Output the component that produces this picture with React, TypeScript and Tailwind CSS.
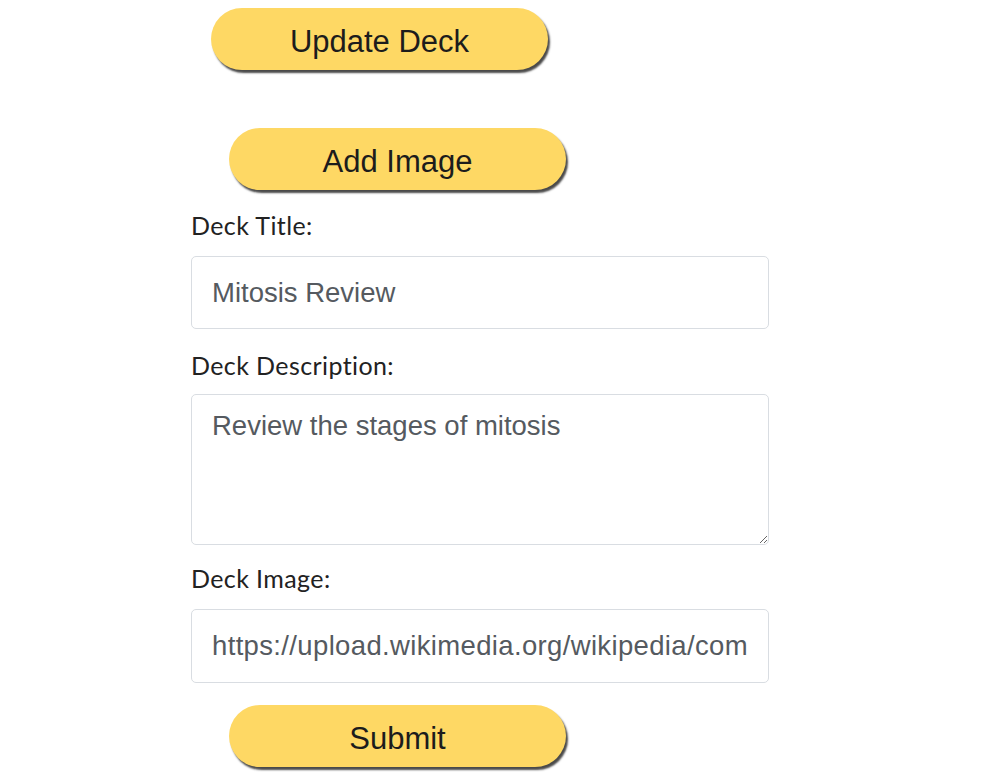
import React from 'react';

const btn =
  "h-[62px] w-[337px] rounded-full bg-[#fed864] pt-[6px] text-[31px] text-[#1c1c1c] shadow-[2px_3px_2px_#4a4a4a] flex items-center justify-center [font-family:'Liberation_Sans',Arial,sans-serif]";

const label =
  "text-[25px] leading-[30px] tracking-[0.4px] text-[#222] [font-family:Lato,'Noto_Sans',sans-serif]";

const field =
  "w-full rounded-[5px] border border-[#d9dde2] bg-white px-[20px] text-[27.5px] text-[#555a60] outline-none [font-family:'Liberation_Sans',Arial,sans-serif]";

export default function App() {
  return (
    <div className="min-h-screen bg-white">
      <div className="ml-[191px] flex w-[578px] flex-col items-start pt-[8px]">
        <button className={`${btn} ml-[20px]`}>Update Deck</button>
        <button className={`${btn} ml-[38px] mt-[58px]`}>Add Image</button>

        <label className={`${label} mt-[20px]`}>Deck Title:</label>
        <input
          readOnly
          className={`${field} mt-[16px] h-[73px]`}
          value="Mitosis Review"
        />

        <label className={`${label} mt-[21px]`}>Deck Description:</label>
        <textarea
          readOnly
          className={`${field} mt-[14px] h-[151px] pt-[10px] leading-[1.5]`}
          value="Review the stages of mitosis"
        />

        <label className={`${label} mt-[18px]`}>Deck Image:</label>
        <input
          readOnly
          className={`${field} mt-[16px] h-[74px] tracking-[0.35px]`}
          value="https://upload.wikimedia.org/wikipedia/commons/thumb/mitosis_stages.png"
        />

        <button className={`${btn} ml-[38px] mt-[22px]`}>Submit</button>
      </div>
    </div>
  );
}
